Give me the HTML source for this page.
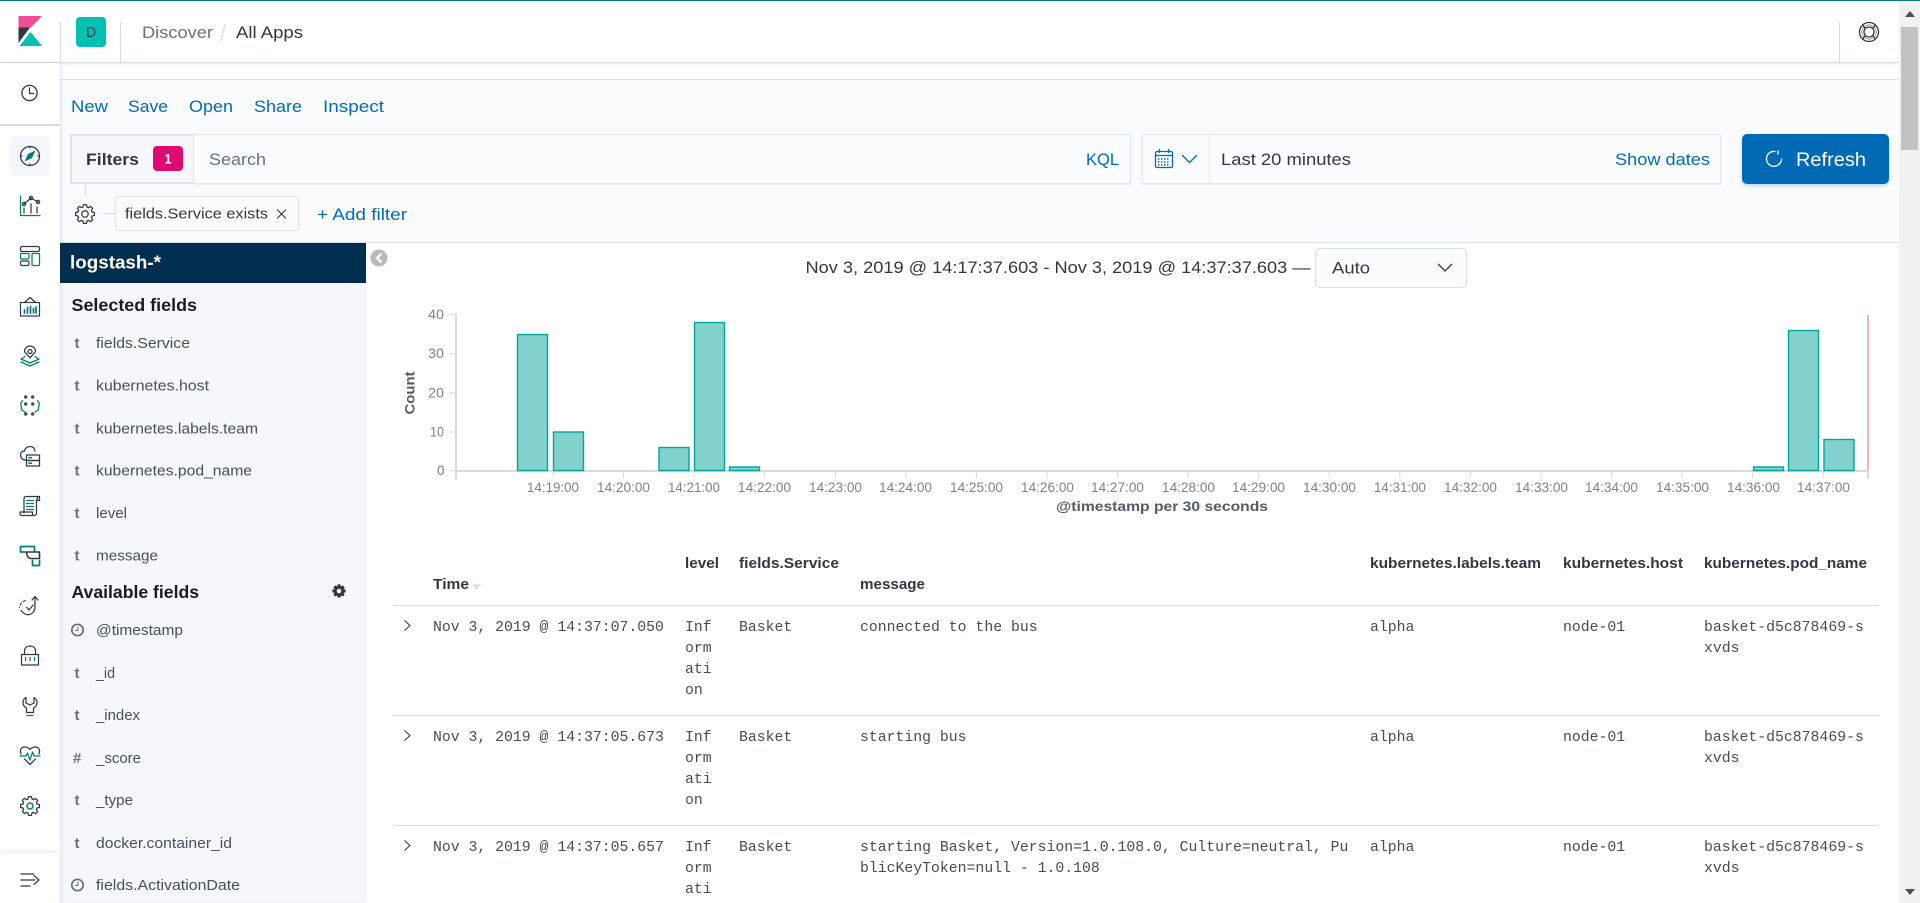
<!DOCTYPE html>
<html lang="en">
<head>
<meta charset="utf-8">
<title>Discover - Kibana</title>
<style>
html,body{margin:0;padding:0;width:1920px;height:903px;overflow:hidden;background:#fff}
#p{position:relative;width:1920px;height:903px;overflow:hidden}
#p div{position:absolute;box-sizing:border-box}
svg{position:absolute;left:0;top:0}
text{font-family:"Liberation Sans",sans-serif;font-size:16.8px;fill:#343741}
.b{fill:#006bb4}
.g{fill:#69707d}
.s{font-weight:700}
.f{font-size:15px;fill:#4a4e58}
.ty{font-size:15px;font-weight:700;fill:#69707d}
.ax{font-size:13.5px;fill:#7b8190}
.h{font-size:14.6px;font-weight:700;fill:#343741}
.m{font-family:"Liberation Mono",monospace;font-size:14.8px;fill:#474b55;transform:translateY(-.8px)}
.d{fill:none;stroke:#343741;stroke-width:1.25;stroke-linecap:round;stroke-linejoin:round}
.t{fill:none;stroke:#017d73;stroke-width:1.25;stroke-linecap:round;stroke-linejoin:round}
.bar{fill:#82d1cc;stroke:#00a69b;stroke-width:1.4}
</style>
</head>
<body>
<div id="p">
  <div style="left:0;top:0;width:1920px;height:1px;background:#017d73;z-index:3"></div>
  <div style="left:0;top:1px;width:1899px;height:62px;background:#fff;border-bottom:1.5px solid #d3dae6;box-shadow:0 1px 3px rgba(152,162,179,.25)"></div>
  <div style="left:60px;top:79px;width:1839px;height:164px;background:#fafbfd;border-top:1.5px solid #d9dfe9;border-bottom:1.5px solid #d9dfe9"></div>
  <div style="left:0;top:63px;width:60px;height:840px;background:#fff;box-shadow:1px 0 4px rgba(152,162,179,.3)"></div>
  <div style="left:0;top:124px;width:60px;height:2px;background:#d3dae6"></div>
  <div style="left:10px;top:136px;width:40px;height:40px;background:#f5f7fa;border-radius:5px"></div>
  <div style="left:0;top:853px;width:60px;height:50px;background:#fff;box-shadow:0 -2px 5px rgba(152,162,179,.2)"></div>
  <div style="left:60px;top:22px;width:1px;height:40px;background:#d3dae6"></div>
  <div style="left:120px;top:22px;width:1px;height:40px;background:#d3dae6"></div>
  <div style="left:1839px;top:22px;width:1px;height:40px;background:#d3dae6"></div>
  <div style="left:76px;top:17px;width:30px;height:30px;background:#00bfb3;border-radius:4px"></div>

  <div style="left:194px;top:134px;width:937px;height:50px;background:#fbfcfd;border:1px solid #e3e7ef;border-left:0;box-shadow:0 1px 2px rgba(152,162,179,.2)"></div>
  <div style="left:70px;top:134px;width:124px;height:50px;background:#f5f7fa;border:2px solid #dfe3ea;border-right-width:1px"></div>
  <div style="left:153px;top:146px;width:30px;height:25px;background:#dd0a73;border-radius:4px"></div>
  <div style="left:1142px;top:134px;width:579px;height:50px;background:#fbfcfd;border:1px solid #e3e7ef;box-shadow:0 1px 2px rgba(152,162,179,.2)"></div>
  <div style="left:1209px;top:134px;width:1px;height:50px;background:#e3e7ef"></div>
  <div style="left:1742px;top:134px;width:147px;height:50px;background:#006bb4;border-radius:5px;box-shadow:0 2px 3px rgba(0,107,180,.25)"></div>
  <div style="left:85px;top:184px;width:1px;height:12px;background:#d3dae6"></div>
  <div style="left:103px;top:213px;width:12px;height:1px;background:#d3dae6"></div>
  <div style="left:115px;top:196px;width:184px;height:35px;background:#fcfcfd;border:1px solid #dfe3ea;border-radius:3px"></div>

  <div style="left:60px;top:243px;width:307px;height:660px;background:#f5f7fa;box-shadow:inset 4px 0 4px -3px rgba(152,162,179,.25)"></div>
  <div style="left:60px;top:243px;width:306px;height:40px;background:#012d4e"></div>
  <div style="left:1315px;top:248px;width:152px;height:40px;background:#fbfcfd;border:1px solid #d9dfe9;border-radius:5px"></div>

  <div style="left:393px;top:605px;width:1486px;height:1px;background:#d3dae6"></div>
  <div style="left:393px;top:715px;width:1486px;height:1px;background:#d3dae6"></div>
  <div style="left:393px;top:825px;width:1486px;height:1px;background:#d3dae6"></div>

  <div style="left:1899px;top:1px;width:21px;height:902px;background:#f1f1f1"></div>
  <div style="left:1901px;top:27px;width:17px;height:123px;background:#c1c1c1"></div>

  <svg width="1920" height="903" viewBox="0 0 1920 903" xmlns="http://www.w3.org/2000/svg">
    <defs>
      <path id="gear" d="M8 3L8.5 .6H11.5L12 3L13.54 3.62L15.58 2.31L17.69 4.42L16.38 6.46L17 8L19.4 8.5V11.5L17 12L16.38 13.54L17.69 15.58L15.58 17.69L13.54 16.38L12 17L11.5 19.4H8.5L8 17L6.46 16.38L4.42 17.69L2.31 15.58L3.62 13.54L3 12L.6 11.5V8.5L3 8L3.62 6.46L2.31 4.42L4.42 2.31L6.46 3.62Z"/>
    </defs>

    <!-- logo -->
    <path d="M18.5 16H42L31 27.5H18.5Z" fill="#f04e98"/>
    <path d="M18.5 27.5H30L18.5 43Z" fill="#343741"/>
    <path d="M19.5 46L30.5 32L42 46Z" fill="#00bfb3"/>
    <text x="86" y="37" style="font-size:14.5px" textLength="10" lengthAdjust="spacingAndGlyphs">D</text>

    <!-- breadcrumbs -->
    <text x="142" y="38" class="g" textLength="71" lengthAdjust="spacingAndGlyphs">Discover</text>
    <path d="M225 24L221 41" stroke="#d3dae6" stroke-width="1.2"/>
    <text x="236" y="38" textLength="67" lengthAdjust="spacingAndGlyphs">All Apps</text>

    <!-- help lifebuoy -->
    <g class="d" style="stroke-width:1.3">
      <circle cx="1869" cy="32" r="9.5"/><circle cx="1869" cy="32" r="5"/><circle cx="1869" cy="32" r="7.2" style="stroke-width:.5"/>
      <path d="M1862.5 25L1865.4 28.4M1875.5 25L1872.6 28.4M1862.5 39L1865.4 35.6M1875.5 39L1872.6 35.6"/>
    </g>

    <!-- nav icons -->
    <g class="d"><circle cx="29.5" cy="93" r="7.6"/><path d="M29.5 88V93.5H34"/></g>

    <g class="d"><circle cx="30" cy="156" r="9.5"/><path d="M30 146.5v1.5M30 164v1.5M20.5 156H22M38 156h1.5"/></g>
    <path d="M35.5 150.5L32 158L24.5 161.5L28 154Z" fill="#017d73"/>

    <path class="t" d="M20.5 196V215.5H40"/>
    <g class="d"><path d="M24 204L31 198L38 202"/><circle cx="24" cy="204" r="1.6"/><circle cx="31" cy="198" r="1.6"/><circle cx="38" cy="202" r="1.6"/><path d="M24 208V213M31 204V213M37 207V213"/></g>

    <rect class="d" x="20.5" y="246.5" width="19" height="5" rx="1.5"/>
    <rect class="t" x="20.5" y="253.5" width="8.5" height="5.5" rx="1"/>
    <rect class="d" x="20.5" y="261" width="8.5" height="4.5" rx="1.5"/>
    <rect class="t" x="32" y="253.5" width="7.5" height="12" rx="1"/>

    <path class="d" style="stroke-dasharray:1.6 1.1" d="M20.5 302.5H39.5V316H20.5Z"/>
    <path class="d" d="M25 302L30 297.5L35 302"/>
    <path class="t" style="stroke-width:1.7" d="M24.5 313V310M27.5 313V307.5M30.5 313V306.5M33.5 313V308.5M36 313V307"/>

    <g class="d"><path d="M30 358C27 354 24.5 352 24.5 351.5A5.5 5.5 0 0 1 35.5 351.5C35.5 352 33 354 30 358Z"/><circle cx="30" cy="351.5" r="2"/></g>
    <path class="t" d="M25 356.5L21 359L30 363L39 359L35 356.5M21 362L30 366L39 362"/>

    <g fill="#4a4e58"><circle cx="25.7" cy="397" r="1.7"/><circle cx="32.7" cy="397" r="1.7"/><circle cx="25.7" cy="404" r="1.7"/><circle cx="32.7" cy="404" r="1.7"/><circle cx="25.7" cy="414" r="1.7"/><circle cx="32.7" cy="414" r="1.7"/></g>
    <path class="t" d="M22.7 400.7L20.7 403L21.7 410L25 412M37.3 400.7L39.3 403L38.3 410L35 412"/>

    <path class="d" d="M25.5 460C22.5 460 20.5 458 20.5 455C20.5 452.5 22 451 24.5 451C25 448 27.5 446.5 30 446.5C32.5 446.5 34.5 448 35 451"/>
    <rect class="d" x="26.5" y="455" width="13" height="5.5"/><rect class="d" x="26.5" y="460.5" width="13" height="5.5"/>
    <path class="t" d="M29 457.7h2.5M29 463.2h2.5" style="stroke-width:1.6"/>

    <path class="d" d="M24 513V499C24 497 25 496.5 26.5 496.5H39.5C38 496.5 37 497.5 37 499V500.5H39.5V497M36.5 500V513C36.5 514.5 35.5 515.5 34 515.5H22C20.5 515.5 20 514.5 20 513.5V512H32.5V515"/>
    <path class="t" d="M26.5 500.5H33.5M26.5 503.5H33.5M26.5 506.5H33.5M26.5 509.5H33.5" style="stroke-width:1.2"/>

    <path class="t" style="stroke-width:1.7" d="M34.5 551.5V546.5H20.5V552H25M32.5 560.5V565.5H39.5V560.5"/>
    <path class="d" style="stroke-width:1.6" d="M26.5 552H39.5V558.5H31C28 558.5 26.5 555 26.5 552Z"/>

    <path class="t" stroke-dasharray="2.5 2.2" d="M25.5 600.5C22 601.5 20 604 19.5 607.5"/>
    <path class="d" d="M21 610.5C23 613 25 614.7 28 614.7C32 614.7 35 611 35 607V597M32 600L35 596.5L38 600M26.7 607.3L29 610L33.3 605"/>

    <path class="d" d="M21.5 654.5H38.5V665H21.5ZM24.5 654.5V651C24.5 647.5 27 646 30 646C33 646 35.5 647.5 35.5 651V654.5"/>
    <path class="t" d="M25.5 657.5V660.5M30 657.5V660.5M34.5 657.5V660.5"/>

    <path class="d" d="M26 697.5C24 698.5 23 700.5 23 702.5C23 705 24.5 707 26.5 708V712.5H33.5V708C35.5 707 37 705 37 702.5C37 700.5 36 698.5 34 697.5V703L30 705L26 703Z"/>
    <path class="t" d="M27 715.5H33"/>

    <path class="d" d="M21 754C20 751 20.5 748.5 22.5 747.5C25 746.5 28 747 30 749.5C32 747 35 746.5 37.5 747.5C39.5 748.5 40 751 39 754M24.5 759L30 764.5L35.5 759"/>
    <path class="t" d="M20 756H26L27.5 753L30 760L32.5 752L34 756H40"/>

    <use href="#gear" x="20" y="796" class="d"/>
    <circle class="t" cx="30" cy="806" r="3" style="stroke-width:1.4"/>

    <g class="d"><path d="M21 874H33.5M21 880H35M21 886H30M34 875.5L39 880L34 884.5"/></g>

    <!-- top nav menu -->
    <text x="71" y="112" class="b" textLength="37" lengthAdjust="spacingAndGlyphs">New</text>
    <text x="128" y="112" class="b" textLength="40" lengthAdjust="spacingAndGlyphs">Save</text>
    <text x="189" y="112" class="b" textLength="44" lengthAdjust="spacingAndGlyphs">Open</text>
    <text x="254" y="112" class="b" textLength="48" lengthAdjust="spacingAndGlyphs">Share</text>
    <text x="323" y="112" class="b" textLength="61" lengthAdjust="spacingAndGlyphs">Inspect</text>

    <!-- query bar -->
    <text x="86" y="165" class="s" textLength="53" lengthAdjust="spacingAndGlyphs">Filters</text>
    <text x="164.5" y="163.5" class="s" style="fill:#fff;font-size:14px" textLength="7" lengthAdjust="spacingAndGlyphs">1</text>
    <text x="209" y="165" class="g" textLength="57" lengthAdjust="spacingAndGlyphs">Search</text>
    <text x="1086" y="165" class="b" textLength="33" lengthAdjust="spacingAndGlyphs">KQL</text>

    <g fill="none" stroke="#006bb4" stroke-width="1.3" stroke-linecap="round" stroke-linejoin="round">
      <rect x="1155.5" y="151.5" width="17" height="16" rx="1.5"/><path d="M1155.5 155.5H1172.5M1159.5 149.5V152.5M1168.5 149.5V152.5"/>
      <path stroke-dasharray="1.4 1.6" stroke-linecap="butt" stroke-width="1.5" d="M1158 159H1170M1158 162H1170M1158 165H1170"/>
      <path d="M1182.5 155.5L1189.5 162.5L1196.5 155.5"/>
    </g>
    <text x="1221" y="165" textLength="130" lengthAdjust="spacingAndGlyphs">Last 20 minutes</text>
    <text x="1615" y="165" class="b" textLength="95" lengthAdjust="spacingAndGlyphs">Show dates</text>
    <path d="M1775.5 151.5A7.5 7.5 0 1 0 1781.5 158.5" fill="none" stroke="#fff" stroke-width="1.3"/>
    <path d="M1778 150.5L1778 154.5" stroke="#fff" stroke-width="1.3"/>
    <text x="1796" y="166" style="fill:#fff;font-size:19px" textLength="70" lengthAdjust="spacingAndGlyphs">Refresh</text>

    <!-- filter row -->
    <g transform="translate(75 204)"><use href="#gear" class="d"/><circle cx="10" cy="10" r="3.2" class="d"/></g>
    <text x="125" y="218.5" style="font-size:15px" textLength="143" lengthAdjust="spacingAndGlyphs">fields.Service exists</text>
    <path d="M277 209.5L286 218.5M286 209.5L277 218.5" stroke="#343741" stroke-width="1.1"/>
    <text x="317" y="220" class="b" textLength="90" lengthAdjust="spacingAndGlyphs">+ Add filter</text>

    <!-- sidebar -->
    <text x="70" y="268.5" class="s" style="fill:#fff;font-size:18px" textLength="91" lengthAdjust="spacingAndGlyphs">logstash-*</text>
    <text x="71.5" y="311" class="s" style="font-size:17.5px;fill:#1a1c21" textLength="125.5" lengthAdjust="spacingAndGlyphs">Selected fields</text>
    <text x="71.5" y="598" class="s" style="font-size:17.5px;fill:#1a1c21" textLength="127.5" lengthAdjust="spacingAndGlyphs">Available fields</text>
    <g transform="translate(332.5 584.5) scale(.65)"><use href="#gear" fill="#343741" stroke="#343741" stroke-width="1.5"/><circle cx="10" cy="10" r="3.5" fill="#f5f7fa"/></g>

    <text x="74.5" y="348" class="ty">t</text><text x="96" y="348" class="f" textLength="94" lengthAdjust="spacingAndGlyphs">fields.Service</text>
    <text x="74.5" y="390.5" class="ty">t</text><text x="96" y="390.5" class="f" textLength="113" lengthAdjust="spacingAndGlyphs">kubernetes.host</text>
    <text x="74.5" y="433.5" class="ty">t</text><text x="96" y="433.5" class="f" textLength="162" lengthAdjust="spacingAndGlyphs">kubernetes.labels.team</text>
    <text x="74.5" y="475.5" class="ty">t</text><text x="96" y="475.5" class="f" textLength="156" lengthAdjust="spacingAndGlyphs">kubernetes.pod_name</text>
    <text x="74.5" y="518" class="ty">t</text><text x="96" y="518" class="f" textLength="31" lengthAdjust="spacingAndGlyphs">level</text>
    <text x="74.5" y="560.5" class="ty">t</text><text x="96" y="560.5" class="f" textLength="62" lengthAdjust="spacingAndGlyphs">message</text>

    <g fill="none" stroke="#69707d"><circle cx="77.5" cy="630" r="5.7" stroke-width="1.7"/><path d="M77.8 627V630.5H75" stroke-width="1.1"/></g>
    <text x="96" y="635" class="f" textLength="87" lengthAdjust="spacingAndGlyphs">@timestamp</text>
    <text x="74.5" y="678" class="ty">t</text><text x="96" y="678" class="f" textLength="19" lengthAdjust="spacingAndGlyphs">_id</text>
    <text x="74.5" y="720" class="ty">t</text><text x="96" y="720" class="f" textLength="44" lengthAdjust="spacingAndGlyphs">_index</text>
    <text x="73" y="763" class="ty">#</text><text x="96" y="763" class="f" textLength="45" lengthAdjust="spacingAndGlyphs">_score</text>
    <text x="74.5" y="805" class="ty">t</text><text x="96" y="805" class="f" textLength="37" lengthAdjust="spacingAndGlyphs">_type</text>
    <text x="74.5" y="848" class="ty">t</text><text x="96" y="848" class="f" textLength="136" lengthAdjust="spacingAndGlyphs">docker.container_id</text>
    <g fill="none" stroke="#69707d"><circle cx="77.5" cy="885" r="5.7" stroke-width="1.7"/><path d="M77.8 882V885.5H75" stroke-width="1.1"/></g>
    <text x="96" y="890" class="f" textLength="144" lengthAdjust="spacingAndGlyphs">fields.ActivationDate</text>

    <!-- sidebar collapse -->
    <circle cx="379" cy="258" r="8.5" fill="#b9b9b9"/>
    <path d="M381.5 253.5L377 258L381.5 262.5" fill="none" stroke="#fff" stroke-width="2.4"/>

    <!-- histogram header -->
    <text x="805.5" y="273" textLength="505" lengthAdjust="spacingAndGlyphs">Nov 3, 2019 @ 14:17:37.603 - Nov 3, 2019 @ 14:37:37.603 —</text>
    <text x="1332" y="273.5" textLength="38" lengthAdjust="spacingAndGlyphs">Auto</text>
    <path d="M1438 264L1445 271L1452 264" fill="none" stroke="#343741" stroke-width="1.3"/>

    <!-- chart -->
    <g stroke="#d9d9d9" stroke-width="1" fill="none">
      <path d="M449 314.5H456M449 353.7H456M449 393H456M449 432H456M449 470.7H456"/>
      <path d="M553 471V478M623.6 471V478M694.1 471V478M764.7 471V478M835.3 471V478M905.9 471V478M976.4 471V478M1047 471V478M1117.6 471V478M1188.1 471V478M1258.7 471V478M1329.3 471V478M1399.8 471V478M1470.4 471V478M1541 471V478M1611.6 471V478M1682.1 471V478M1752.7 471V478M1823.3 471V478"/>
      <path stroke-width="2" d="M456 314V479M455 471H1869M1868 471V479"/>
    </g>
    <path d="M1868 315V470" stroke="#f0b4b4" stroke-width="2"/>
    <rect class="bar" x="517.5" y="334.5" width="30" height="136"/>
    <rect class="bar" x="553.5" y="432" width="30" height="38.5"/>
    <rect class="bar" x="659" y="447.5" width="30" height="23"/>
    <rect class="bar" x="694.5" y="322.5" width="30" height="148"/>
    <rect class="bar" x="729.5" y="467" width="30" height="3.5"/>
    <rect class="bar" x="1753.5" y="467" width="30" height="3.5"/>
    <rect class="bar" x="1788.5" y="330.5" width="30" height="140"/>
    <rect class="bar" x="1824" y="439.5" width="30" height="31"/>

    <text x="428" y="319" class="ax" textLength="16" lengthAdjust="spacingAndGlyphs">40</text>
    <text x="428" y="358" class="ax" textLength="16" lengthAdjust="spacingAndGlyphs">30</text>
    <text x="428" y="397.5" class="ax" textLength="16" lengthAdjust="spacingAndGlyphs">20</text>
    <text x="430" y="436.5" class="ax" textLength="14" lengthAdjust="spacingAndGlyphs">10</text>
    <text x="437" y="475" class="ax" textLength="7.5" lengthAdjust="spacingAndGlyphs">0</text>
    <text transform="translate(414.5 414.5) rotate(-90)" class="s" style="font-size:13.5px;fill:#545b66" textLength="43" lengthAdjust="spacingAndGlyphs">Count</text>

    <g>
      <text x="527" y="492" class="ax" textLength="52" lengthAdjust="spacingAndGlyphs">14:19:00</text>
      <text x="597" y="492" class="ax" textLength="53" lengthAdjust="spacingAndGlyphs">14:20:00</text>
      <text x="668" y="492" class="ax" textLength="52" lengthAdjust="spacingAndGlyphs">14:21:00</text>
      <text x="738" y="492" class="ax" textLength="53" lengthAdjust="spacingAndGlyphs">14:22:00</text>
      <text x="809" y="492" class="ax" textLength="53" lengthAdjust="spacingAndGlyphs">14:23:00</text>
      <text x="879" y="492" class="ax" textLength="53" lengthAdjust="spacingAndGlyphs">14:24:00</text>
      <text x="950" y="492" class="ax" textLength="53" lengthAdjust="spacingAndGlyphs">14:25:00</text>
      <text x="1021" y="492" class="ax" textLength="53" lengthAdjust="spacingAndGlyphs">14:26:00</text>
      <text x="1091" y="492" class="ax" textLength="53" lengthAdjust="spacingAndGlyphs">14:27:00</text>
      <text x="1162" y="492" class="ax" textLength="53" lengthAdjust="spacingAndGlyphs">14:28:00</text>
      <text x="1232" y="492" class="ax" textLength="53" lengthAdjust="spacingAndGlyphs">14:29:00</text>
      <text x="1303" y="492" class="ax" textLength="53" lengthAdjust="spacingAndGlyphs">14:30:00</text>
      <text x="1374" y="492" class="ax" textLength="52" lengthAdjust="spacingAndGlyphs">14:31:00</text>
      <text x="1444" y="492" class="ax" textLength="53" lengthAdjust="spacingAndGlyphs">14:32:00</text>
      <text x="1515" y="492" class="ax" textLength="53" lengthAdjust="spacingAndGlyphs">14:33:00</text>
      <text x="1585" y="492" class="ax" textLength="53" lengthAdjust="spacingAndGlyphs">14:34:00</text>
      <text x="1656" y="492" class="ax" textLength="53" lengthAdjust="spacingAndGlyphs">14:35:00</text>
      <text x="1727" y="492" class="ax" textLength="53" lengthAdjust="spacingAndGlyphs">14:36:00</text>
      <text x="1797" y="492" class="ax" textLength="53" lengthAdjust="spacingAndGlyphs">14:37:00</text>
    </g>
    <text x="1056" y="511" class="s" style="font-size:14px;fill:#545b66" textLength="212" lengthAdjust="spacingAndGlyphs">@timestamp per 30 seconds</text>

    <!-- doc table header -->
    <text x="433" y="589" class="h" textLength="36" lengthAdjust="spacingAndGlyphs">Time</text>
    <path d="M472 584.5H481L476.5 589.5Z" fill="#d3dae6"/>
    <text x="685" y="568" class="h" textLength="34" lengthAdjust="spacingAndGlyphs">level</text>
    <text x="739" y="568" class="h" textLength="100" lengthAdjust="spacingAndGlyphs">fields.Service</text>
    <text x="860" y="589" class="h" textLength="65" lengthAdjust="spacingAndGlyphs">message</text>
    <text x="1370" y="568" class="h" textLength="171" lengthAdjust="spacingAndGlyphs">kubernetes.labels.team</text>
    <text x="1563" y="568" class="h" textLength="120" lengthAdjust="spacingAndGlyphs">kubernetes.host</text>
    <text x="1704" y="568" class="h" textLength="163" lengthAdjust="spacingAndGlyphs">kubernetes.pod_name</text>

    <!-- row 1 -->
    <path d="M404.5 620.5L410 625.5L404.5 630.5" fill="none" stroke="#343741" stroke-width="1.1"/>
    <text x="433" y="632" class="m">Nov 3, 2019 @ 14:37:07.050</text>
    <text x="685" y="632" class="m">Inf</text><text x="685" y="653" class="m">orm</text><text x="685" y="674" class="m">ati</text><text x="685" y="695" class="m">on</text>
    <text x="739" y="632" class="m">Basket</text>
    <text x="860" y="632" class="m">connected to the bus</text>
    <text x="1370" y="632" class="m">alpha</text>
    <text x="1563" y="632" class="m">node-01</text>
    <text x="1704" y="632" class="m">basket-d5c878469-s</text><text x="1704" y="653" class="m">xvds</text>

    <!-- row 2 -->
    <path d="M404.5 730.5L410 735.5L404.5 740.5" fill="none" stroke="#343741" stroke-width="1.1"/>
    <text x="433" y="742" class="m">Nov 3, 2019 @ 14:37:05.673</text>
    <text x="685" y="742" class="m">Inf</text><text x="685" y="763" class="m">orm</text><text x="685" y="784" class="m">ati</text><text x="685" y="805" class="m">on</text>
    <text x="739" y="742" class="m">Basket</text>
    <text x="860" y="742" class="m">starting bus</text>
    <text x="1370" y="742" class="m">alpha</text>
    <text x="1563" y="742" class="m">node-01</text>
    <text x="1704" y="742" class="m">basket-d5c878469-s</text><text x="1704" y="763" class="m">xvds</text>

    <!-- row 3 -->
    <path d="M404.5 840.5L410 845.5L404.5 850.5" fill="none" stroke="#343741" stroke-width="1.1"/>
    <text x="433" y="852" class="m">Nov 3, 2019 @ 14:37:05.657</text>
    <text x="685" y="852" class="m">Inf</text><text x="685" y="873" class="m">orm</text><text x="685" y="894" class="m">ati</text>
    <text x="739" y="852" class="m">Basket</text>
    <text x="860" y="852" class="m">starting Basket, Version=1.0.108.0, Culture=neutral, Pu</text>
    <text x="860" y="873" class="m">blicKeyToken=null - 1.0.108</text>
    <text x="1370" y="852" class="m">alpha</text>
    <text x="1563" y="852" class="m">node-01</text>
    <text x="1704" y="852" class="m">basket-d5c878469-s</text><text x="1704" y="873" class="m">xvds</text>

    <!-- scrollbar arrows -->
    <path d="M1905 17H1915L1910 11Z" fill="#505050"/>
    <path d="M1905 889H1915L1910 895Z" fill="#505050"/>
  </svg>
</div>
</body>
</html>
